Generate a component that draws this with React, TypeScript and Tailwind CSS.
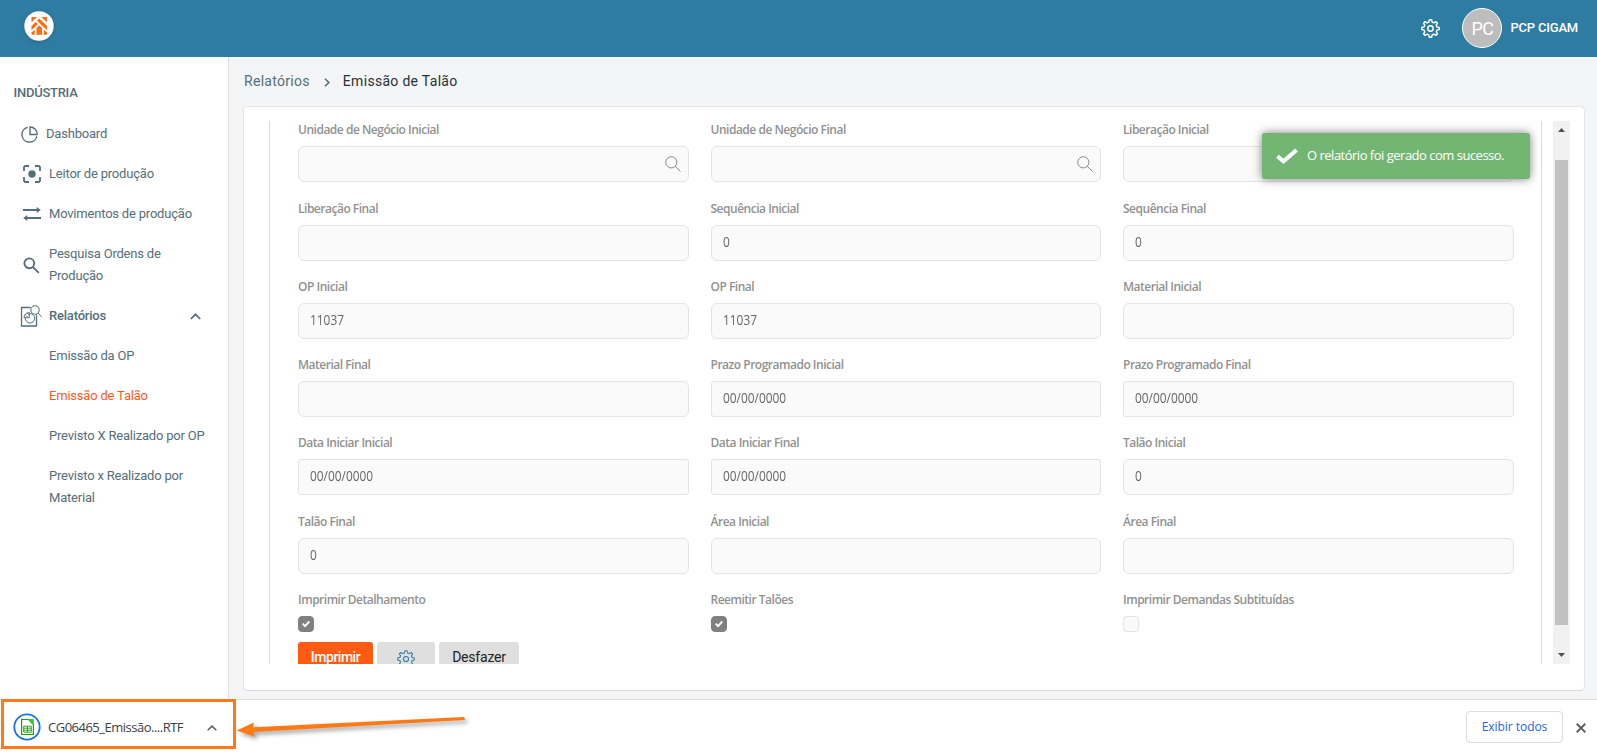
import React from "react";

type Field = { label: string; value?: string; search?: boolean };

const rows: { gap: string; fields: Field[] }[] = [
  { gap: "h-[79px]", fields: [{ label: "Unidade de Negócio Inicial", search: true }, { label: "Unidade de Negócio Final", search: true }, { label: "Liberação Inicial" }] },
  { gap: "h-[78px]", fields: [{ label: "Liberação Final" }, { label: "Sequência Inicial", value: "0" }, { label: "Sequência Final", value: "0" }] },
  { gap: "h-[78px]", fields: [{ label: "OP Inicial", value: "11037" }, { label: "OP Final", value: "11037" }, { label: "Material Inicial" }] },
  { gap: "h-[78px]", fields: [{ label: "Material Final" }, { label: "Prazo Programado Inicial", value: "00/00/0000" }, { label: "Prazo Programado Final", value: "00/00/0000" }] },
  { gap: "h-[79px]", fields: [{ label: "Data Iniciar Inicial", value: "00/00/0000" }, { label: "Data Iniciar Final", value: "00/00/0000" }, { label: "Talão Inicial", value: "0" }] },
  { gap: "h-[78px]", fields: [{ label: "Talão Final", value: "0" }, { label: "Área Inicial" }, { label: "Área Final" }] },
];

const checks = [
  { label: "Imprimir Detalhamento", on: true },
  { label: "Reemitir Talões", on: true },
  { label: "Imprimir Demandas Subtituídas", on: false },
];

function Gear({ className, sw = 1.5 }: { className: string; sw?: number }) {
  return (
    <svg viewBox="0 0 24 24" className={className} fill="none" stroke="currentColor" strokeWidth={sw} strokeLinejoin="round">
      <path d="M9.9 3.9 10.6 1h2.8l.7 2.9 2.2.9 2.5-1.5 2 2-1.5 2.5.9 2.2 2.8.7v2.6l-2.8.7-.9 2.2 1.5 2.5-2 2-2.5-1.5-2.2.9-.7 2.9h-2.8l-.7-2.9-2.2-.9-2.5 1.5-2-2 1.5-2.5-.9-2.2-2.8-.7v-2.6l2.8-.7.9-2.2-1.5-2.5 2-2 2.5 1.5z" />
      <circle cx="12" cy="12" r="3.4" />
    </svg>
  );
}

function Logo() {
  return (
    <svg viewBox="0 0 30 30" className="h-[30px] w-[30px] drop-shadow-sm">
      <circle cx="15" cy="15" r="14.7" fill="#fff" />
      <g fill="#ff6a13">
        <path d="M7.5 6H13L7.5 11.3zM17.3 6h5.7v5.3z" />
        <path d="M15.2 7.5 23 15v4.3L12.9 9.7z" />
        <path d="M11.7 11 14 13.1 7.5 19.2v-4.3z" />
        <path d="M15.2 14.2 18 17v6.7h-5.5V17z" />
        <path d="M7.5 23.7v-2.3l3.2-2.7v5zM23 23.7v-2.3l-3.2-2.7v5z" />
      </g>
    </svg>
  );
}

function Label({ text }: { text: string }) {
  return <div className="h-[18px] text-[12px] leading-[18px] font-semibold tracking-[-0.49px] whitespace-nowrap text-[#919191]">{text}</div>;
}

function FieldBox({ label, value, search }: Field) {
  return (
    <div className="w-[390.5px]">
      <Label text={label} />
      <div className={`mt-[7px] flex h-9 items-center justify-between border border-[#e4e4e4] bg-[#fafafa] pr-[7px] pl-[11px] ${value === "00/00/0000" ? "rounded-[3px]" : "rounded-[6px]"}`}>
        <span className="-mt-[3px] inline-block origin-left scale-x-[0.85] text-[14px] text-[#666]">{value}</span>
        {search && (
          <svg viewBox="0 0 16 16" className="h-4 w-4" fill="none" stroke="#888" strokeWidth="1">
            <circle cx="6.3" cy="6.3" r="5.6" />
            <path d="m10.3 10.3 5.2 5.2" />
          </svg>
        )}
      </div>
    </div>
  );
}

function Item({ icon, children, className = "" }: { icon?: React.ReactNode; children: React.ReactNode; className?: string }) {
  return (
    <div className={`flex min-h-10 items-center py-[9px] text-[13px] leading-[22px] tracking-[-0.2px] ${className}`}>
      <span className="flex w-[49px] shrink-0 pl-[21px]">{icon}</span>
      <span>{children}</span>
    </div>
  );
}

export default function App() {
  return (
    <div className="relative flex h-[756px] w-[1597px] flex-col overflow-hidden bg-[#f4f5f7] font-['Roboto',sans-serif] text-[#546e7a]">
      <header className="flex h-[57px] shrink-0 items-center justify-between bg-[#2f7ca3] pr-[19px] pl-6">
        <div className="-mt-[5px]"><Logo /></div>
        <div className="-mt-px flex items-center text-white">
          <Gear className="mr-[22px] h-[19px] w-[19px]" sw={1.8} />
          <div className="flex h-10 w-10 items-center justify-center rounded-full border-[1.5px] border-white bg-[#bdbdbd] text-[18px] tracking-[-0.6px]">PC</div>
          <span className="ml-2 text-[13px] font-medium tracking-[-0.2px]">PCP CIGAM</span>
        </div>
      </header>

      <div className="flex h-[642px] shrink-0">
        <aside className="w-[229px] shrink-0 border-r border-[#dcdee0] bg-white">
          <div className="mt-[26px] mb-[11px] h-5 pl-[13.5px] text-[13px] leading-5 font-medium tracking-[-0.25px]">INDÚSTRIA</div>
          <div className="flex h-10 items-center pl-[21px] text-[13px] tracking-[-0.2px]">
            <svg viewBox="0 0 18 18" className="mr-2 h-[17px] w-[17px]" fill="none" stroke="currentColor" strokeWidth="1.5">
              <path d="M7 1.3A8 8 0 1 0 16.8 11" />
              <path d="M9.5 1v8h7.6A7.6 7.6 0 0 0 9.5 1z" />
            </svg>
            Dashboard
          </div>
          <Item icon={<svg viewBox="0 0 18 18" className="ml-[2px] h-[18px] w-[18px]" fill="none" stroke="currentColor" strokeWidth="1.8"><path d="M1 6V2.2L2.2 1H6M12 1h3.8L17 2.2V6M17 12v3.8L15.8 17H12M6 17H2.2L1 15.8V12" /><circle cx="9" cy="9" r="3.7" fill="currentColor" stroke="none" /></svg>}>Leitor de produção</Item>
          <Item icon={<svg viewBox="0 0 18 14" className="ml-[2px] h-[14px] w-[18px]" fill="none" stroke="currentColor" strokeWidth="1.8"><path d="M0 3h15M3 11h15" /><path d="m13.8 0 4 3-4 3zM4.2 8l-4 3 4 3z" fill="currentColor" stroke="none" /></svg>}>Movimentos de produção</Item>
          <Item icon={<svg viewBox="0 0 17 17" className="mt-px ml-[2px] h-[17px] w-[17px]" fill="none" stroke="currentColor" strokeWidth="1.9"><circle cx="6.3" cy="6.3" r="4.9" /><path d="m9.8 9.8 6 6" /></svg>}>Pesquisa Ordens de<br />Produção</Item>
          <div className="flex h-10 items-center text-[13px] font-medium tracking-[-0.2px]">
            <svg viewBox="0 0 22 22" className="ml-[20px] h-[22px] w-[22px]" fill="none" stroke="currentColor">
              <path d="M10.5 2.5H1.5V21H16.5V9.5" strokeWidth="1.3" />
              <circle cx="15" cy="5" r="4.2" fill="#fff" strokeWidth="1.1" />
              <path d="m18 8 3.7 4" />
              <circle cx="10" cy="13.3" r="4.7" strokeWidth="1" />
              <path d="M9.3 7.5v5.2H4a5.2 5.2 0 0 1 5.3-5.2z" fill="#fff" strokeWidth="1" />
              <path d="m5.2 9.5 3 3M7.2 8l2 2" strokeWidth=".8" />
            </svg>
            <span className="ml-[7px]">Relatórios</span>
            <svg viewBox="0 0 11 7" className="mr-[27px] ml-auto h-[7px] w-[11px]" fill="none" stroke="currentColor" strokeWidth="1.7"><path d="m.8 6 4.7-4.7L10.2 6" /></svg>
          </div>
          <Item>Emissão da OP</Item>
          <Item className="text-[#ff5a1f]">Emissão de Talão</Item>
          <Item>Previsto X Realizado por OP</Item>
          <Item>Previsto x Realizado por<br />Material</Item>
        </aside>

        <main className="flex-1 pr-3 pl-[14px]">
          <div className="flex h-[49px] items-center pl-px text-[14px] tracking-[0.3px]">
            <span>Relatórios</span>
            <svg viewBox="0 0 6 9" className="mr-[13px] ml-[14px] mt-[2px] h-[9px] w-[6px]" fill="none" stroke="currentColor" strokeWidth="1.6"><path d="M1 .7 4.8 4.5 1 8.3" /></svg>
            <span className="text-[#263238]">Emissão de Talão</span>
          </div>
          <section className="flex h-[585px] rounded-[5px] border border-[#e3e5e8] border-b-[#d6d8da] bg-white pt-[14px] pl-[25px] font-['Open_Sans',sans-serif]">
            <div className="h-[543px] w-[1273px] overflow-hidden border-x border-[#d9dcdf] pl-7">
              {rows.map((row, i) => (
                <div key={i} className={`flex gap-[22px] ${row.gap}`}>
                  {row.fields.map((f) => <FieldBox key={f.label} {...f} />)}
                </div>
              ))}
              <div className="flex h-[51px] gap-[22px]">
                {checks.map((c) => (
                  <div key={c.label} className="w-[390.5px]">
                    <Label text={c.label} />
                    <div className={`mt-[7px] flex h-4 w-4 items-center justify-center rounded-[4px] border ${c.on ? "border-[#808080] bg-[#808080]" : "border-[#e4e4e4] bg-[#fafafa]"}`}>
                      {c.on && <svg viewBox="0 0 8 8" className="h-2 w-2" fill="none" stroke="#fff" strokeWidth="1.9"><path d="m.7 3.7 2.3 2.4 4.3-4.6" /></svg>}
                    </div>
                  </div>
                ))}
              </div>
              <div className="flex h-[31px] gap-1 font-['Roboto',sans-serif] text-[14px] leading-[31px]">
                <button className="w-[75px] rounded-[3px] bg-[#ff5a12] font-medium tracking-[-0.5px] text-white">Imprimir</button>
                <button className="flex w-[58px] items-center justify-center rounded-[3px] bg-[#dfdfdf] pt-[2px] text-[#2f7ca3]"><Gear className="h-[18px] w-[18px]" sw={1.4} /></button>
                <button className="w-20 rounded-[3px] bg-[#dfdfdf] tracking-[-0.2px] text-[#222]">Desfazer</button>
              </div>
            </div>
            <div className="ml-[11px] flex h-[543px] w-[17px] flex-col items-center bg-[#f1f1f1]">
              <svg viewBox="0 0 7 4" className="mt-[7px] h-1 w-[7px]" fill="#505050"><path d="M3.5 0 7 4H0z" /></svg>
              <div className="mt-7 h-[465px] w-[13px] bg-[#c1c1c1]" />
              <svg viewBox="0 0 7 4" className="mt-[28px] h-1 w-[7px]" fill="#505050"><path d="M3.5 4 7 0H0z" /></svg>
            </div>
          </section>
        </main>
      </div>

      <footer className="flex h-[57px] shrink-0 items-center border-t border-[#dadce0] bg-white pr-[11px] font-['Open_Sans',sans-serif]">
        <div className="-mt-[9px] ml-px flex h-[50px] w-[235px] items-center border-[3px] border-[#ff7a14] pl-[9px]">
          <svg viewBox="0 0 28 28" className="mt-[7px] h-7 w-7" fill="none">
            <circle cx="14" cy="14" r="12.7" stroke="#1a73e8" strokeWidth="1.8" />
            <path d="M8.6 6.5h7l4.8 5v10H8.6z" stroke="#18a303" strokeWidth="1.2" />
            <path d="M14.8 6h6v6.3z" fill="#43c330" />
            <path d="M10.7 13.2h7.6v6h-7.6zM10.7 15.2h7.6M10.7 17.2h7.6M14.5 13.2v6" stroke="#18a303" strokeWidth=".9" />
          </svg>
          <span className="mt-[8px] ml-[7px] text-[13px] tracking-[-0.5px] text-[#3c4043]">CG06465_Emissão....RTF</span>
          <svg viewBox="0 0 10 6" className="mt-[9px] mr-[16px] ml-auto h-[6px] w-[10px]" fill="none" stroke="#5f6368" strokeWidth="1.6"><path d="m.7 5.3 4.3-4.2 4.3 4.2" /></svg>
        </div>
        <div className="-mt-[2px] mr-[13px] ml-auto flex h-8 w-[97px] items-center justify-center rounded-[4px] border border-[#dadce0] text-[12px] font-medium tracking-[-0.05px] text-[#1a66e8]">Exibir todos</div>
        <svg viewBox="0 0 10 10" className="-mt-px h-[10px] w-[10px]" stroke="#5f6368" strokeWidth="2"><path d="m.7.7 8.6 8.6M9.3.7.7 9.3" /></svg>
      </footer>

      <svg viewBox="0 0 240 30" className="absolute top-[712px] left-[234px] h-[30px] w-[240px] drop-shadow-[3px_3px_2px_rgba(0,0,0,0.35)]" fill="#ff7a14">
        <path d="M2.5 18.5 20 10.5l-1 4.8L230 5l1 3L19 20l1.5 4.5z" />
      </svg>

      <div className="absolute top-[133px] left-[1262px] flex h-[46px] w-[268px] items-center rounded-[2px] bg-[#6bb26b]/95 pl-[14px] font-['Open_Sans',sans-serif] text-[13px] text-white shadow-[0_0_10px_rgba(0,0,0,0.5)]">
        <svg viewBox="0 0 22 16" className="h-4 w-[22px]" fill="none" stroke="#fff" strokeWidth="4"><path d="m1.5 8.3 6 5L20.5 2" /></svg>
        <span className="-mt-px ml-[9px] tracking-[-0.5px] whitespace-nowrap">O relatório foi gerado com sucesso.</span>
      </div>
    </div>
  );
}
